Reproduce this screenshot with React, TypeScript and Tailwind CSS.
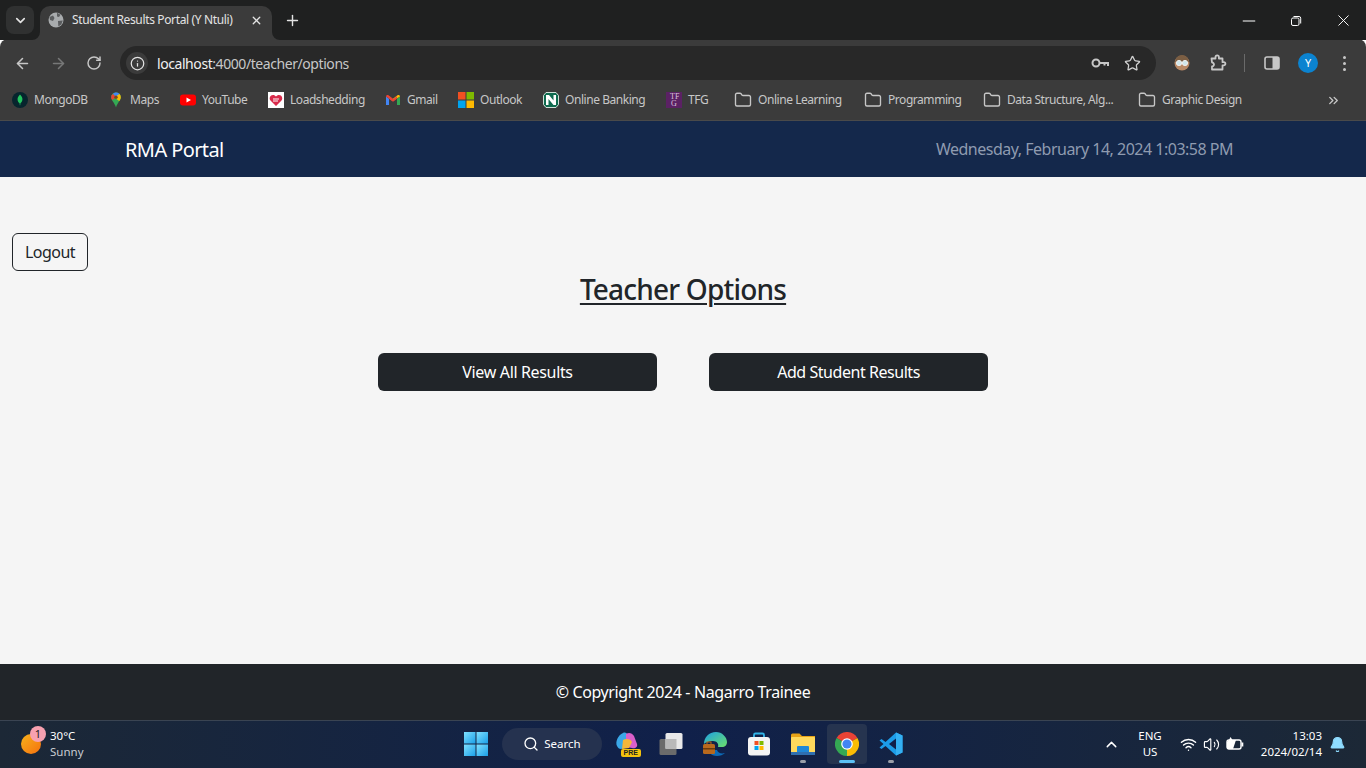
import {
  ArrowLeft,
  ArrowRight,
  Bell,
  ChevronDown,
  ChevronUp,
  ChevronsRight,
  Folder,
  Info,
  Minus,
  Plus,
  RotateCw,
  Search,
  Star,
  Volume2,
  Wifi,
  X,
} from 'lucide-react';
import React from 'react';

const uiFont = "font-['Noto_Sans','Open_Sans',sans-serif]";

function Mongo() {
  return (
    <svg width="16" height="16" viewBox="0 0 16 16">
      <circle cx="8" cy="8" r="8" fill="#06252d" />
      <path d="M8 2.500c2 2 2.600 3.700 2.400 5.300-.2 1.700-1.300 2.900-2 3.400l-.2 2h-.4l-.2-2c-.8-.5-1.900-1.700-2-3.400C5.400 6.200 6 4.500 8 2.500Z" fill="#22c55e" />
    </svg>
  );
}

function Maps() {
  return (
    <svg width="16" height="16" viewBox="0 0 16 16">
      <path d="M8 .5c2.800 0 4.800 2 4.800 4.700 0 3.300-3.500 5.500-4.800 10.300C6.700 10.700 3.200 8.500 3.200 5.200 3.200 2.500 5.200.5 8 .5Z" fill="#34a853" />
      <path d="M8 .5c1.500 0 2.800.6 3.600 1.600L8 5.200 5 2C5.800 1 6.800.5 8 .5Z" fill="#4285f4" />
      <path d="M11.600 2.100c.8.800 1.200 1.900 1.200 3.100 0 1.500-.7 2.700-1.600 3.900L6 5.200Z" fill="#fbbc04" />
      <path d="M5 2 3.700 3.300c-.3.500-.5 1.200-.5 1.900 0 1.100.4 2 1 2.900L8 5.200Z" fill="#ea4335" />
      <circle cx="8" cy="5.200" r="1.700" fill="#7a4a20" />
    </svg>
  );
}

function YouTube() {
  return (
    <svg width="16" height="16" viewBox="0 0 16 16">
      <rect y="2.500" width="16" height="11" rx="3" fill="#f00" />
      <path d="M6.500 5.500 11 8l-4.500 2.500Z" fill="#fff" />
    </svg>
  );
}

function Loadshedding() {
  return (
    <svg width="16" height="16" viewBox="0 0 16 16">
      <rect width="16" height="16" fill="#fff" />
      <path d="M8 14 2.500 8.500C.8 6.500 2 3 5 3c1.300 0 2.300.6 3 1.500C8.700 3.600 9.700 3 11 3c3 0 4.200 3.500 2.500 5.500Z" fill="#d92b4b" />
      <path d="M5 7h6M5 9h5" stroke="#fff" strokeWidth="1" />
    </svg>
  );
}

function Gmail() {
  return (
    <svg width="16" height="16" viewBox="0 0 16 16">
      <path d="M1 13V4.500l3 2.300V13Z" fill="#4285f4" />
      <path d="M12 13V6.800l3-2.300V13Z" fill="#34a853" />
      <path d="M1 4.500C1 3 2.500 2.500 3.500 3.200L8 6.700l-1 2.100-6-4.300Z" fill="#ea4335" />
      <path d="M15 4.500c0-1.500-1.500-2-2.500-1.300L8 6.700 8 9l7-4.500Z" fill="#fbbc04" />
      <path d="M4 6.800 8 9.800l4-3V4.300L8 7.300 4 4.300Z" fill="#ea4335" />
    </svg>
  );
}

function Outlook() {
  return (
    <svg width="16" height="16" viewBox="0 0 16 16">
      <rect width="7.500" height="7.500" fill="#f25022" />
      <rect x="8.500" width="7.500" height="7.500" fill="#7fba00" />
      <rect y="8.500" width="7.500" height="7.500" fill="#00a4ef" />
      <rect x="8.500" y="8.500" width="7.500" height="7.500" fill="#ffb900" />
    </svg>
  );
}

function Nedbank() {
  return (
    <svg width="16" height="16" viewBox="0 0 16 16">
      <path d="M3 .5h10l2.500 3v9L13 15.500H3L.5 12.500v-9Z" fill="#0f6b4f" stroke="#cfe0d8" strokeWidth="1" />
      <path d="M3 3h3l4.500 5.500V3H13v10h-2.500L5.500 7v6H3Z" fill="#fff" />
    </svg>
  );
}

function Tfg() {
  return (
    <div className="flex h-4 w-4 items-center justify-center bg-[#5b2164] font-['Liberation_Serif',serif] text-[8px] leading-[7px] text-[#d9c4dc]">
      <span className="w-2 text-center">TF G</span>
    </div>
  );
}

const FolderIcon = () => <Folder size={18} strokeWidth={1.8} className="text-[#c7c7c7]" />;

const bookmarks = [
  { label: 'MongoDB', icon: <Mongo />, iconBox: 'w-[16px]', text: 'w-[54px] ml-[6px]' },
  { label: 'Maps', icon: <Maps />, iconBox: 'w-[16px]', text: 'w-[30px] ml-[6px]' },
  { label: 'YouTube', icon: <YouTube />, iconBox: 'w-[16px]', text: 'w-[46px] ml-[6px]' },
  { label: 'Loadshedding', icon: <Loadshedding />, iconBox: 'w-[16px]', text: 'w-[75px] ml-[6px]' },
  { label: 'Gmail', icon: <Gmail />, iconBox: 'w-[16px]', text: 'w-[31px] ml-[6px]' },
  { label: 'Outlook', icon: <Outlook />, iconBox: 'w-[16px]', text: 'w-[43px] ml-[6px]' },
  { label: 'Online Banking', icon: <Nedbank />, iconBox: 'w-[16px]', text: 'w-[81px] ml-[6px]' },
  { label: 'TFG', icon: <Tfg />, iconBox: 'w-[16px]', text: 'w-[21px] ml-[6px]' },
  { label: 'Online Learning', icon: <FolderIcon />, iconBox: 'w-[18px] ml-[5px]', text: 'w-[84px] ml-[6px]' },
  { label: 'Programming', icon: <FolderIcon />, iconBox: 'w-[18px] ml-[2px]', text: 'w-[73px] ml-[6px]' },
  { label: 'Data Structure, Alg...', icon: <FolderIcon />, iconBox: 'w-[18px] ml-[2px]', text: 'w-[108px] ml-[6px]' },
  { label: 'Graphic Design', icon: <FolderIcon />, iconBox: 'w-[18px] ml-[3px]', text: 'w-[81px] ml-[6px]' },
];

function ChromeFrame() {
  return (
    <div className={`${uiFont} flex flex-col`}>
      {/* tab strip */}
      <div className="relative flex h-10 items-end bg-[#1f2020] pl-[6px]">
        <div className="mb-[6px] flex h-7 w-7 items-center justify-center rounded-lg bg-[#303131]">
          <ChevronDown size={15} strokeWidth={2.6} className="text-[#e3e3e3]" />
        </div>
        <div className="relative ml-[6px] flex h-[34px] w-[232px] items-center rounded-t-[10px] bg-[#3b3b3b] pb-[6px] pl-[8px]">
          <svg width="8" height="8" viewBox="0 0 8 8" className="absolute bottom-0 right-full">
            <path d="M8 0A8 8 0 0 1 0 8H8Z" fill="#3b3b3b" />
          </svg>
          <svg width="8" height="8" viewBox="0 0 8 8" className="absolute bottom-0 left-full">
            <path d="M0 0A8 8 0 0 0 8 8H0Z" fill="#3b3b3b" />
          </svg>
          <svg width="16" height="16" viewBox="0 0 16 16">
            <circle cx="8" cy="8" r="7.500" fill="#a8abad" />
            <path d="M1.500 5 5 3.500 6.500 6 5 9 2 8ZM9 .8l3.500 2L11 5 9 4.500ZM10 9l4.800-.5-1.500 4-3 2Z" fill="#5a5c5e" />
          </svg>
          <span className="ml-2 w-[162px] whitespace-nowrap text-[12px] tracking-[-0.36px] text-[#e3e3e3]">
            Student Results Portal (Y Ntuli)
          </span>
          <X size={13} strokeWidth={2.4} className="ml-[16px] text-[#e3e3e3]" />
        </div>
        <Plus size={17} strokeWidth={2} className="mb-[11px] ml-[12px] text-[#e3e3e3]" />
        <div className="ml-auto flex h-10 items-center pt-[1px] text-white">
          <Minus size={20} strokeWidth={1.2} className="mr-[31px]" />
          <svg width="12" height="12" viewBox="0 0 12 12" fill="none" stroke="currentColor" className="mr-[32px]">
            <rect x="1.500" y="3" width="7.500" height="7.500" rx="1.500" />
            <path d="M3.500 1.500h5.500a1.700 1.700 0 0 1 1.700 1.700V8.500" />
          </svg>
          <X size={19} strokeWidth={1.2} className="mr-[13px]" />
        </div>
      </div>
      {/* toolbar */}
      <div className="-mt-[1px] flex h-[41px] items-end rounded-t-lg bg-[#3b3b3b] text-[#c7c7c7]">
        <div className="flex h-[34px] w-[120px] items-center pl-[14px]">
          <ArrowLeft size={17} strokeWidth={2.2} />
          <ArrowRight size={17} strokeWidth={2.2} className="ml-[19px] text-[#777878]" />
          <RotateCw size={16} strokeWidth={2.2} className="ml-[19px]" />
        </div>
        <div className="flex h-[34px] w-[1036px] items-center rounded-full bg-[#282828] pl-[6px]">
          <div className="flex h-[22px] w-[22px] items-center justify-center rounded-full bg-[#3b3b3b]">
            <Info size={15} strokeWidth={2} className="text-[#e3e3e3]" />
          </div>
          <span className="ml-[9px] text-[14px] tracking-[-0.43px] text-[#c7c7c7]">
            <span className="text-[#f0f0f0]">localhost</span>:4000/teacher/options
          </span>
          <svg width="18" height="12" viewBox="0 0 18 12" fill="none" stroke="#c7c7c7" strokeWidth="2" className="ml-auto">
            <circle cx="5" cy="6" r="3.500" />
            <path d="M8.500 6H17v3M13.500 6v2.500" />
          </svg>
          <Star size={17} strokeWidth={1.8} className="ml-[15px] mr-[15px] text-[#d0d0d0]" />
        </div>
        <div className="flex h-[34px] flex-1 items-center">
          <svg width="16" height="16" viewBox="0 0 16 16" className="ml-[18px]">
            <circle cx="8" cy="8" r="7.500" fill="#b98a67" />
            <path d="M1 7a7 7 0 0 1 14 0Z" fill="#7b5e43" />
            <circle cx="5" cy="8" r="2.600" fill="#cfe6ea" stroke="#eee" />
            <circle cx="11" cy="8" r="2.600" fill="#cfe6ea" stroke="#eee" />
          </svg>
          <svg width="18" height="18" viewBox="0 0 18 18" fill="none" stroke="#c7c7c7" strokeWidth="1.800" className="ml-[19px]">
            <path d="M2.500 4.500h4V3a1.700 1.700 0 0 1 3.400 0v1.500h3.600v3.700h1.300a1.600 1.600 0 0 1 0 3.200h-1.300v4.100H3V12.500a2 2 0 0 0 0-4Z" strokeLinejoin="round" />
          </svg>
          <div className="ml-[17px] h-[18px] w-[1px] bg-[#6a6a6a]" />
          <svg width="16" height="14" viewBox="0 0 16 14" className="ml-[19px]">
            <rect x="1" y="1" width="14" height="12" rx="2" fill="none" stroke="#c7c7c7" strokeWidth="1.600" />
            <rect x="8.500" y="1" width="6.500" height="12" fill="#c7c7c7" />
          </svg>
          <div className="ml-[18px] flex h-5 w-5 items-center justify-center rounded-full bg-[#0b83d0] text-[11px] text-white">
            Y
          </div>
          <div className="ml-[25px] flex flex-col gap-[3px]">
            <span className="h-[3px] w-[3px] rounded-full bg-[#c7c7c7]" />
            <span className="h-[3px] w-[3px] rounded-full bg-[#c7c7c7]" />
            <span className="h-[3px] w-[3px] rounded-full bg-[#c7c7c7]" />
          </div>
        </div>
      </div>
      {/* bookmarks */}
      <div className="flex h-10 items-center gap-[20px] bg-[#3b3b3b] pl-[12px] text-[12px] text-[#c7c7c7]">
        {bookmarks.map((b) => (
          <div key={b.label} className="flex items-center">
            <div className={`${b.iconBox} flex justify-center`}>{b.icon}</div>
            <span className={`${b.text} whitespace-nowrap tracking-[-0.45px]`}>{b.label}</span>
          </div>
        ))}
        <ChevronsRight size={15} strokeWidth={2.2} className="ml-[63px] text-[#c7c7c7]" />
      </div>
      <div className="h-[1px] bg-[#4a4a4a]" />
    </div>
  );
}

function Portal() {
  return (
    <div className="flex flex-1 flex-col font-['Noto_Sans',sans-serif]">
      <header className="flex h-14 items-center justify-between bg-[#14284b] pl-[125px] pr-[133px]">
        <span className="pt-[1px] text-[20px] tracking-[-0.6px] text-white">RMA Portal</span>
        <span className="text-[16px] tracking-[-0.5px] text-[#8f9bb0]">Wednesday, February 14, 2024 1:03:58 PM</span>
      </header>
      <main className="flex flex-1 flex-col bg-[#f5f5f5] pt-14">
        <button className="ml-3 h-[38px] w-[76px] rounded-md border border-[#212529] text-[16px] tracking-[-0.5px] text-[#212529]">
          Logout
        </button>
        <h2 className="mt-[1px] text-center text-[28px] font-medium leading-[34px] tracking-[-0.8px] text-[#212529] underline decoration-2 underline-offset-[3px]">
          Teacher Options
        </h2>
        <div className="mt-[47px] flex justify-center gap-[52px]">
          <button className="h-[38px] w-[279px] rounded-md bg-[#212529] text-[16px] tracking-[-0.35px] text-white">
            View All Results
          </button>
          <button className="h-[38px] w-[279px] rounded-md bg-[#212529] text-[16px] tracking-[-0.45px] text-white">
            Add Student Results
          </button>
        </div>
      </main>
      <footer className="flex h-14 items-center justify-center bg-[#212529] text-[16px] tracking-[-0.38px] text-white">
        © Copyright 2024 - Nagarro Trainee
      </footer>
    </div>
  );
}

function Slot({ children, active, dot }: { children: React.ReactNode; active?: boolean; dot?: boolean }) {
  return (
    <div className={`relative mx-[2px] flex h-10 w-[40px] items-center justify-center rounded ${active ? 'bg-[#26344f]' : ''}`}>
      {children}
      {dot && <span className="absolute bottom-[1px] h-[3px] w-[6px] rounded-full bg-[#9a9fa8]" />}
      {active && <span className="absolute bottom-[1px] h-[3px] w-4 rounded-full bg-[#5cc1f5]" />}
    </div>
  );
}

function Taskbar() {
  return (
    <div className={`${uiFont} flex h-12 items-center border-t border-[#3a4452] bg-gradient-to-r from-[#1c2836] via-[#10204a] to-[#1c2836] pb-[1px] text-white`}>
      <div className="relative flex w-[452px] items-center pl-[21px]">
        <div className="h-5 w-5 rounded-full bg-gradient-to-br from-[#f6b21b] to-[#f46f0f]" />
        <span className="absolute left-[30px] top-[-2px] flex h-4 w-4 items-center justify-center rounded-full bg-[#f7a1b0] text-[11px] text-[#222]">
          1
        </span>
        <div className="ml-[9px] flex flex-col text-[11.500px] leading-4">
          <span>30°C</span>
          <span className="text-[#c9ccd1]">Sunny</span>
        </div>
      </div>
      <div className="flex h-10 w-[48px] items-center justify-center">
        <svg width="24" height="24" viewBox="0 0 24 24">
          <defs>
            <linearGradient id="win" x1="0" y1="0" x2="1" y2="1">
              <stop offset="0" stopColor="#7fe0ff" />
              <stop offset="1" stopColor="#1a9fe8" />
            </linearGradient>
          </defs>
          <rect width="11.500" height="11.500" fill="url(#win)" />
          <rect x="12.500" width="11.500" height="11.500" fill="url(#win)" />
          <rect y="12.500" width="11.500" height="11.500" fill="url(#win)" />
          <rect x="12.500" y="12.500" width="11.500" height="11.500" fill="url(#win)" />
        </svg>
      </div>
      <div className="ml-[2px] mr-[3px] flex h-8 w-[100px] items-center justify-center rounded-full bg-[#25324f]">
        <Search size={16} strokeWidth={2} />
        <span className="ml-[5px] text-[11.500px]">Search</span>
      </div>
      <Slot>
        <div className="relative h-6 w-6">
          <svg width="24" height="22" viewBox="0 0 24 22">
            <path d="M2 14C0 10 3 3 8 1c2-1 4 0 5 2l-3 13-4 1c-2 0-3-1-4-3Z" fill="#3aa7e8" />
            <path d="M11 2c3-2 6-1 8 2l3 8c1 3-2 5-5 4l-6-1Z" fill="#d95fc9" />
            <path d="M8 8c3-2 8-1 9 2l-3 6-7 1Z" fill="#f4b63a" />
          </svg>
          <span className="absolute bottom-[-1px] right-[-2px] rounded-[2px] bg-[#f4c20d] px-[3px] font-['Liberation_Sans',sans-serif] text-[7px] font-bold leading-[8px] text-[#222]">
            PRE
          </span>
        </div>
      </Slot>
      <Slot>
        <svg width="24" height="22" viewBox="0 0 24 22">
          <rect x="0.500" y="6" width="17" height="16" rx="1.500" fill="#6b6b6b" />
          <rect x="6.500" y="0" width="17" height="16" rx="1.500" fill="#e9e9e9" />
          <rect x="6.500" y="6" width="11" height="10" fill="#b9b9b9" />
        </svg>
      </Slot>
      <Slot>
        <svg width="24" height="24" viewBox="0 0 24 24">
          <defs>
            <linearGradient id="edge" x1="0" y1="0" x2="1" y2="1">
              <stop offset="0" stopColor="#1da0e5" />
              <stop offset="1" stopColor="#6be06a" />
            </linearGradient>
          </defs>
          <path d="M1 12C1 5 6 0 13 0c6 0 11 5 11 10 0 3-2 5-5 5h-4c1-3-1-6-5-6-5 0-8 2-9 3Z" fill="url(#edge)" />
          <path d="M3 14c1 5 5 10 11 10 3 0 6-1 8-3-4 1-7 0-8-3H3Z" fill="#0c6bb8" />
          <rect x="0" y="12" width="12" height="10" rx="1.500" fill="#b8691d" />
          <rect x="0" y="16" width="12" height="1.500" fill="#6b3b0c" />
          <rect x="4" y="10" width="4" height="3" fill="none" stroke="#b8691d" />
        </svg>
      </Slot>
      <Slot>
        <svg width="24" height="24" viewBox="0 0 24 24">
          <path d="M7 6V3a1.500 1.500 0 0 1 1.500-1.500h7A1.500 1.500 0 0 1 17 3v3" fill="none" stroke="#33b5e8" strokeWidth="1.800" />
          <rect x="1" y="5" width="22" height="18.500" rx="3" fill="#f4f4f4" />
          <rect x="7.500" y="9" width="4" height="4" fill="#f25022" />
          <rect x="12.500" y="9" width="4" height="4" fill="#7fba00" />
          <rect x="7.500" y="14" width="4" height="4" fill="#00a4ef" />
          <rect x="12.500" y="14" width="4" height="4" fill="#ffb900" />
        </svg>
      </Slot>
      <Slot dot>
        <svg width="24" height="22" viewBox="0 0 24 22">
          <path d="M0 2a1.500 1.500 0 0 1 1.500-1.500h7L11 3h13v3H0Z" fill="#e8a317" />
          <rect x="0" y="4" width="24" height="18" rx="1" fill="#ffd95c" />
          <rect x="6" y="13" width="12" height="7" rx="1" fill="#1f87d6" />
          <rect x="0" y="19" width="24" height="3" fill="#2f6fb0" />
        </svg>
      </Slot>
      <Slot active>
        <svg width="24" height="24" viewBox="0 0 24 24">
          <path d="M12 12 22.400 6A12 12 0 0 0 1.600 6Z" fill="#ea4335" />
          <path d="M12 12 1.600 6A12 12 0 0 0 12 24Z" fill="#34a853" />
          <path d="M12 12 22.400 6A12 12 0 0 1 12 24Z" fill="#fbbc04" />
          <circle cx="12" cy="12" r="5.800" fill="#fff" />
          <circle cx="12" cy="12" r="4.600" fill="#4285f4" />
        </svg>
      </Slot>
      <Slot dot>
        <svg width="24" height="24" viewBox="0 0 24 24">
          <path d="M17 0.500 23.500 3.500v17L17 23.500 6.500 14 2.500 17 .5 15.500 4.500 12 .5 8.500 2.500 7 6.500 10Z" fill="#1c9ce8" />
          <path d="M17 6.500 10 12l7 5.500Z" fill="#10204a" />
          <path d="M17 0.500 23.500 3.500v17L17 23.500Z" fill="#34b0f2" />
        </svg>
      </Slot>
      <div className="flex flex-1 items-center">
        <ChevronUp size={17} strokeWidth={2} className="ml-[190px]" />
        <div className="ml-[18px] flex w-[24px] flex-col items-center text-[11.500px] leading-4">
          <span>ENG</span>
          <span>US</span>
        </div>
        <Wifi size={17} strokeWidth={2} className="ml-[18px]" />
        <Volume2 size={17} strokeWidth={1.6} className="ml-[6px]" />
        <svg width="18" height="14" viewBox="0 0 18 14" className="ml-[6px]">
          <rect x="1" y="3" width="14" height="9" rx="2" fill="none" stroke="#fff" strokeWidth="1.400" />
          <rect x="15.500" y="5.500" width="1.800" height="4" fill="#fff" />
          <path d="M1 12V5l2-2h3l4 0-3 9Z" fill="#fff" />
          <path d="M3 3 4.500 0 6.500 3Z" fill="#fff" />
        </svg>
        <div className="ml-[16px] flex w-[62px] flex-col items-end whitespace-nowrap text-[11.500px] leading-4">
          <span>13:03</span>
          <span>2024/02/14</span>
        </div>
        <Bell size={17} fill="#8fdcff" strokeWidth={1.5} className="ml-[7px] text-[#8fdcff]" />
      </div>
    </div>
  );
}

export default function App() {
  return (
    <div className="flex h-[768px] w-[1366px] flex-col overflow-hidden">
      <ChromeFrame />
      <Portal />
      <Taskbar />
    </div>
  );
}
